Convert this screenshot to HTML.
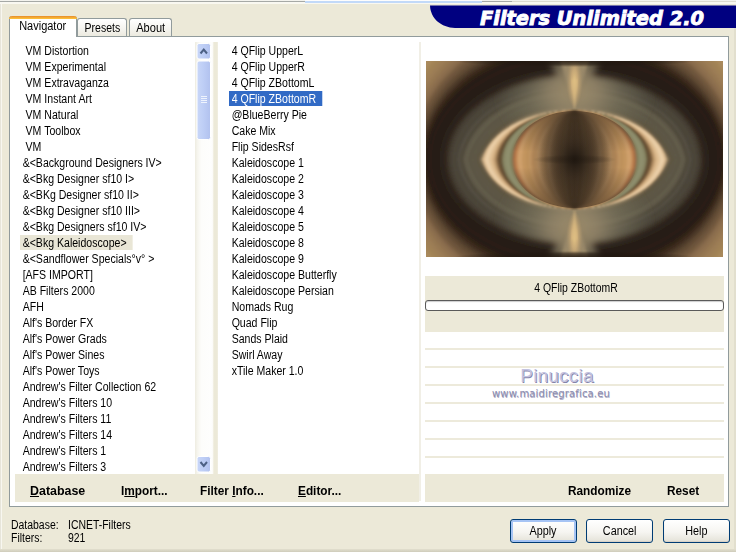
<!DOCTYPE html>
<html lang="en"><head><meta charset="utf-8"><title>Filters Unlimited 2.0</title>
<style>
html,body{margin:0;padding:0}
body{width:736px;height:552px;overflow:hidden;background:#ece9d8;position:relative;font-family:"Liberation Sans",sans-serif;font-size:12px;color:#000}
.abs{position:absolute}
#topstrip{left:0;top:0;width:736px;height:4px}
#panel{left:9px;top:36px;width:719.5px;height:471px;border:1px solid #919b9c;background:#fff;box-sizing:border-box}
.tab{position:absolute;box-sizing:border-box;border:1px solid #919b9c;border-bottom:none;border-radius:3px 3px 0 0;background:linear-gradient(#ffffff,#f4f3ee 60%,#eceadf);text-align:center}
.tab span{display:inline-block;transform:scaleX(.875);transform-origin:50% 50%;white-space:nowrap}
#tab1{left:9px;top:16px;width:68px;height:21px;background:#fff;border-top:none;z-index:3}
#tab1:before{content:"";position:absolute;left:-1px;right:-1px;top:0;height:3px;background:linear-gradient(#e68b2c,#ffc73c);border-radius:3px 3px 0 0}
#tab1 span{margin-top:3px;transform:scaleX(.915)}
#tab2{left:77px;top:18px;width:50px;height:18px}
#tab3{left:129px;top:18px;width:43px;height:18px}
#tab2 span,#tab3 span{margin-top:2px}#tab3 span{transform:scaleX(.92)}
.list{position:absolute;top:42.6px;background:#fff}
.it{height:16px;line-height:16px;white-space:nowrap}
.it span{display:inline-block;transform:scaleX(.88);transform-origin:0 50%;padding:0 7px 0 3px;height:15px;line-height:16px;margin-top:0}
.sel{background:#316ac5;color:#fff}
.isel{background:#e9e6d6}
#llist{left:15px;width:181px;height:432px;padding-left:5px;box-sizing:border-box}
#rlist{left:218px;width:201px;height:432px;padding-left:11px;box-sizing:border-box}
#sb{left:195px;top:42px;width:18px;height:432px}
#div1{left:213px;top:42px;width:5px;height:432px;background:linear-gradient(90deg,#f4f2e8,#ece9d8 25%,#ece9d8 80%,#f2f0e5)}
#div2{left:419px;top:42px;width:2px;height:459px;background:#f1efe6}
#bbar{left:15px;top:474px;width:404px;height:28px;background:#ece9d8}
#rbar{left:425px;top:474px;width:299px;height:28px;background:#ece9d8}
.bb{position:absolute;font-weight:bold;font-size:12px;white-space:nowrap;transform:scaleX(.985);transform-origin:0 50%;line-height:16px}
.bb u{text-decoration-thickness:1px;text-underline-offset:1px}
#namebar{left:425px;top:276px;width:299px;height:56px;background:#ece9d8}
#nm{left:426.5px;top:281px;width:299px;text-align:center}
#nm span{display:inline-block;transform:scaleX(.87);white-space:nowrap}
#prog{left:425px;top:300px;width:299px;height:11px;box-sizing:border-box;border:1px solid #5a5a5a;border-radius:3px;background:#fff;box-shadow:inset 0 1px 1px #ccc}
.ln{position:absolute;left:425px;width:299px;height:2px;background:#edeadb}
.btn{position:absolute;top:519px;height:24px;box-sizing:border-box;border:1px solid #003c74;border-radius:3px;background:linear-gradient(#ffffff,#f6f5f1 55%,#e4e2d8);text-align:center;line-height:22px;box-shadow:inset 0 -1px 1px #d6d0c5}
.btn span{display:inline-block;transform:scaleX(.9);white-space:nowrap}
#b1{left:510px;width:67px;box-shadow:inset 0 0 0 2px #a6c4f4}
#b2{left:586px;width:67px}
#b3{left:663px;width:67px}
.st{position:absolute;white-space:nowrap;transform:scaleX(.87);transform-origin:0 50%;line-height:14px}
#wm1{left:479px;top:365px;width:156px;text-align:center;font-family:"Liberation Sans",sans-serif;font-size:19px;letter-spacing:.2px;color:#c3c3e0;text-shadow:.8px .8px .6px #8585aa}
#wm2{left:470px;top:388px;width:162px;text-align:center;font-family:"DejaVu Sans","Liberation Sans",sans-serif;font-size:10px;letter-spacing:.15px;color:#8c8cae;text-shadow:.5px .5px .5px #b0b0c8}

</style></head>
<body>
<svg class="abs" id="topstrip" width="736" height="4" viewBox="0 0 736 4">
<rect x="0" y="0" width="736" height="1" fill="#f3f3ee"/>
<rect x="0" y="1" width="305" height="1" fill="#a6a9a6"/>
<rect x="0" y="2" width="736" height="2" fill="#f9f8f1"/>
<rect x="305" y="0" width="177" height="1" fill="#fdfdfd"/>
<rect x="305" y="1" width="177" height="2" fill="#c2d9f8"/>
<rect x="482" y="1" width="30" height="1" fill="#a6a9a6"/>
<rect x="512" y="1" width="224" height="1" fill="#dddbd0"/>
</svg>
<svg class="abs" style="left:424px;top:5px" width="312" height="24" viewBox="0 -0.500 312 24">
<path d="M6,0 L312,0 L312,22.5 L31,22.5 C17,22 6.500,13 6,0 Z" fill="#000080"/>
<text x="56" y="19" font-family="'DejaVu Sans','Liberation Sans',sans-serif" font-weight="bold" font-style="italic" font-size="19" fill="#fff" stroke="#fff" stroke-width=".9" textLength="224" lengthAdjust="spacingAndGlyphs">Filters Unlimited 2.0</text>
</svg>
<div class="abs" style="left:0;top:4px;width:1px;height:545px;background:#e7e5da"></div>
<div class="abs" style="left:1px;top:4px;width:1px;height:545px;background:#f8f7f0"></div>
<div class="abs" id="panel"></div>
<div class="tab" id="tab1"><span>Navigator</span></div>
<div class="tab" id="tab2"><span>Presets</span></div>
<div class="tab" id="tab3"><span>About</span></div>
<div class="list" id="llist">
<div class="it"><span>&nbsp;VM Distortion</span></div>
<div class="it"><span>&nbsp;VM Experimental</span></div>
<div class="it"><span>&nbsp;VM Extravaganza</span></div>
<div class="it"><span>&nbsp;VM Instant Art</span></div>
<div class="it"><span>&nbsp;VM Natural</span></div>
<div class="it"><span>&nbsp;VM Toolbox</span></div>
<div class="it"><span>&nbsp;VM</span></div>
<div class="it"><span>&amp;&lt;Background Designers IV&gt;</span></div>
<div class="it"><span>&amp;&lt;Bkg Designer sf10 I&gt;</span></div>
<div class="it"><span>&amp;&lt;BKg Designer sf10 II&gt;</span></div>
<div class="it"><span>&amp;&lt;Bkg Designer sf10 III&gt;</span></div>
<div class="it"><span>&amp;&lt;Bkg Designers sf10 IV&gt;</span></div>
<div class="it"><span class="isel">&amp;&lt;Bkg Kaleidoscope&gt;</span></div>
<div class="it"><span>&amp;&lt;Sandflower Specials°v° &gt;</span></div>
<div class="it"><span>[AFS IMPORT]</span></div>
<div class="it"><span>AB Filters 2000</span></div>
<div class="it"><span>AFH</span></div>
<div class="it"><span>Alf&#x27;s Border FX</span></div>
<div class="it"><span>Alf&#x27;s Power Grads</span></div>
<div class="it"><span>Alf&#x27;s Power Sines</span></div>
<div class="it"><span>Alf&#x27;s Power Toys</span></div>
<div class="it"><span>Andrew&#x27;s Filter Collection 62</span></div>
<div class="it"><span>Andrew&#x27;s Filters 10</span></div>
<div class="it"><span>Andrew&#x27;s Filters 11</span></div>
<div class="it"><span>Andrew&#x27;s Filters 14</span></div>
<div class="it"><span>Andrew&#x27;s Filters 1</span></div>
<div class="it"><span>Andrew&#x27;s Filters 3</span></div>
</div>
<div class="abs" id="sb">
<svg width="18" height="432" viewBox="0 0 18 432">
<defs><linearGradient id="sg" x1="0" x2="1" y1="0" y2="0"><stop offset="0" stop-color="#c9d7f8"/><stop offset=".5" stop-color="#bdcdf5"/><stop offset="1" stop-color="#b1c1ee"/></linearGradient>
<linearGradient id="tg" x1="0" x2="1" y1="0" y2="0"><stop offset="0" stop-color="#eeece1"/><stop offset=".14" stop-color="#f6f5ee"/><stop offset=".35" stop-color="#fdfdfb"/><stop offset=".9" stop-color="#fefefd"/><stop offset="1" stop-color="#fbfaf6"/></linearGradient></defs>
<rect x="0" y="0" width="18" height="432" fill="url(#tg)"/>
<rect x="2" y="1.5" width="13.5" height="15.500" rx="2" fill="url(#sg)" stroke="#fff"/>
<path d="M5.5,11.500 L8.750,7.500 L12,11.500" fill="none" stroke="#4d6185" stroke-width="2"/>
<rect x="2" y="19" width="13.5" height="78.500" rx="2" fill="url(#sg)" stroke="#fff"/>
<path d="M6,54.500h6M6,56.500h6M6,58.500h6M6,60.500h6" stroke="#eef3fd" stroke-width="1"/>
<rect x="2" y="414.500" width="13.5" height="15.500" rx="2" fill="url(#sg)" stroke="#fff"/>
<path d="M5.5,420 L8.750,424 L12,420" fill="none" stroke="#4d6185" stroke-width="2"/>
</svg>
</div>
<div class="abs" id="div1"></div>
<div class="list" id="rlist">
<div class="it"><span>4 QFlip UpperL</span></div>
<div class="it"><span>4 QFlip UpperR</span></div>
<div class="it"><span>4 QFlip ZBottomL</span></div>
<div class="it"><span class="sel">4 QFlip ZBottomR</span></div>
<div class="it"><span>@BlueBerry Pie</span></div>
<div class="it"><span>Cake Mix</span></div>
<div class="it"><span>Flip SidesRsf</span></div>
<div class="it"><span>Kaleidoscope 1</span></div>
<div class="it"><span>Kaleidoscope 2</span></div>
<div class="it"><span>Kaleidoscope 3</span></div>
<div class="it"><span>Kaleidoscope 4</span></div>
<div class="it"><span>Kaleidoscope 5</span></div>
<div class="it"><span>Kaleidoscope 8</span></div>
<div class="it"><span>Kaleidoscope 9</span></div>
<div class="it"><span>Kaleidoscope Butterfly</span></div>
<div class="it"><span>Kaleidoscope Persian</span></div>
<div class="it"><span>Nomads Rug</span></div>
<div class="it"><span>Quad Flip</span></div>
<div class="it"><span>Sands Plaid</span></div>
<div class="it"><span>Swirl Away</span></div>
<div class="it"><span>xTile Maker 1.0</span></div>
</div>
<div class="abs" id="div2"></div>
<div class="abs" id="bbar"></div>
<div class="bb" style="left:30px;top:483px;transform:scaleX(1.035)"><u>D</u>atabase</div>
<div class="bb" style="left:121px;top:483px">I<u>m</u>port...</div>
<div class="bb" style="left:200px;top:483px">Filter <u>I</u>nfo...</div>
<div class="bb" style="left:298px;top:483px"><u>E</u>ditor...</div>
<div class="abs" style="left:426px;top:61px;width:297px;height:196px">
<svg width="297" height="196" viewBox="0 0 297 196">
<defs>
<radialGradient id="spk" cx="0" cy="0" r="1" gradientUnits="userSpaceOnUse" gradientTransform="translate(148.5 20) scale(8 28)"><stop offset="0" stop-color="#e2c284"/><stop offset=".4" stop-color="#d2b07a" stop-opacity=".8"/><stop offset="1" stop-color="#b0946a" stop-opacity="0"/></radialGradient>
<radialGradient id="cdk" cx="0" cy="0" r="1" gradientUnits="userSpaceOnUse" gradientTransform="translate(148.5 98.5) scale(38 42)"><stop offset="0" stop-color="#1a140e" stop-opacity=".9"/><stop offset=".45" stop-color="#2a2018" stop-opacity=".5"/><stop offset="1" stop-color="#2e241a" stop-opacity="0"/></radialGradient>
<radialGradient id="fan" cx="0" cy="0" r="1" gradientUnits="userSpaceOnUse" gradientTransform="translate(148.5 30) scale(80 66)"><stop offset="0" stop-color="#a08f6c" stop-opacity=".97"/><stop offset=".3" stop-color="#94866a" stop-opacity=".85"/><stop offset=".6" stop-color="#827c64" stop-opacity=".45"/><stop offset="1" stop-color="#74735e" stop-opacity="0"/></radialGradient>
<linearGradient id="edg" x1="0" y1="0" x2="0" y2="1"><stop offset="0" stop-color="#20170f" stop-opacity=".8"/><stop offset="1" stop-color="#20170f" stop-opacity="0"/></linearGradient>
<filter id="ab2" x="-5%" y="-5%" width="110%" height="110%"><feGaussianBlur stdDeviation="1.8"/></filter>
<linearGradient id="bsh" x1="0" y1="0" x2="0" y2="1"><stop offset="0" stop-color="#33261a" stop-opacity=".6"/><stop offset=".2" stop-color="#33261a" stop-opacity=".3"/><stop offset=".42" stop-color="#33261a" stop-opacity="0"/><stop offset=".58" stop-color="#33261a" stop-opacity="0"/><stop offset=".8" stop-color="#33261a" stop-opacity=".3"/><stop offset="1" stop-color="#33261a" stop-opacity=".6"/></linearGradient>
<filter id="ab3" x="-5%" y="-5%" width="110%" height="110%"><feGaussianBlur stdDeviation="3.5"/></filter>
<radialGradient id="edg2"><stop offset="0" stop-color="#20170f" stop-opacity=".85"/><stop offset=".55" stop-color="#20170f" stop-opacity=".6"/><stop offset="1" stop-color="#20170f" stop-opacity="0"/></radialGradient>
<radialGradient id="hmid"><stop offset="0" stop-color="#20170f" stop-opacity=".4"/><stop offset=".6" stop-color="#20170f" stop-opacity=".2"/><stop offset="1" stop-color="#20170f" stop-opacity="0"/></radialGradient>
<filter id="ab1" x="-5%" y="-5%" width="110%" height="110%"><feGaussianBlur stdDeviation="0.8"/></filter>
<clipPath id="acl"><rect width="297" height="196"/></clipPath>
</defs>
<g clip-path="url(#acl)">
<rect width="297" height="196" fill="#b89868"/>
<g filter="url(#ab2)">
<path d="M-111.5,98.5C-111.5,-31.5 -44.0,-147.9 57.7,-193.3C95.0,-209.9 94.0,-71.9 148.5,49.5C203.0,-71.9 202.0,-209.9 239.3,-193.3C341.0,-147.9 408.5,-31.5 408.5,98.5C408.5,228.5 341.0,344.9 239.3,390.3C202.0,406.9 203.0,268.9 148.5,147.5C94.0,268.9 95.0,406.9 57.7,390.3C-44.0,344.9 -111.5,228.5 -111.5,98.5Z" fill="#b69666"/>
<path d="M-105.5,98.5C-105.5,-27.7 -38.9,-140.5 61.3,-183.8C97.3,-199.4 96.2,-67.2 148.5,49.5C200.8,-67.2 199.7,-199.4 235.7,-183.8C335.9,-140.5 402.5,-27.7 402.5,98.5C402.5,224.7 335.9,337.5 235.7,380.8C199.7,396.4 200.8,264.2 148.5,147.5C96.2,264.2 97.3,396.4 61.3,380.8C-38.9,337.5 -105.5,224.7 -105.5,98.5Z" fill="#b59565"/>
<path d="M-99.5,98.5C-99.5,-23.9 -33.7,-133.1 64.9,-174.3C99.6,-188.9 98.3,-62.4 148.5,49.5C198.7,-62.4 197.4,-188.9 232.1,-174.3C330.7,-133.1 396.5,-23.9 396.5,98.5C396.5,220.9 330.7,330.1 232.1,371.3C197.4,385.9 198.7,259.4 148.5,147.5C98.3,259.4 99.6,385.9 64.9,371.3C-33.7,330.1 -99.5,220.9 -99.5,98.5Z" fill="#b69666"/>
<path d="M-93.5,98.5C-93.5,-20.0 -28.5,-125.6 68.5,-164.8C101.9,-178.3 100.5,-57.7 148.5,49.5C196.5,-57.7 195.1,-178.3 228.5,-164.8C325.5,-125.6 390.5,-20.0 390.5,98.5C390.5,217.0 325.5,322.6 228.5,361.8C195.1,375.3 196.5,254.7 148.5,147.5C100.5,254.7 101.9,375.3 68.5,361.8C-28.5,322.6 -93.5,217.0 -93.5,98.5Z" fill="#b49464"/>
<path d="M-87.5,98.5C-87.5,-16.2 -23.4,-118.1 72.1,-155.3C104.1,-167.7 102.7,-52.9 148.5,49.5C194.3,-52.9 192.9,-167.7 224.9,-155.3C320.4,-118.1 384.5,-16.2 384.5,98.5C384.5,213.2 320.4,315.1 224.9,352.3C192.9,364.7 194.3,249.9 148.5,147.5C102.7,249.9 104.1,364.7 72.1,352.3C-23.4,315.1 -87.5,213.2 -87.5,98.5Z" fill="#b39263"/>
<path d="M-81.5,98.5C-81.5,-12.3 -18.2,-110.6 75.7,-145.7C106.4,-157.1 104.8,-48.1 148.5,49.5C192.2,-48.1 190.6,-157.1 221.3,-145.7C315.2,-110.6 378.5,-12.3 378.5,98.5C378.5,209.3 315.2,307.6 221.3,342.7C190.6,354.1 192.2,245.1 148.5,147.5C104.8,245.1 106.4,354.1 75.7,342.7C-18.2,307.6 -81.5,209.3 -81.5,98.5Z" fill="#b49364"/>
<path d="M-75.5,98.5C-75.5,-8.3 -13.0,-103.0 79.3,-136.0C108.6,-146.5 107.0,-43.3 148.5,49.5C190.0,-43.3 188.4,-146.5 217.7,-136.0C310.0,-103.0 372.5,-8.3 372.5,98.5C372.5,205.3 310.0,300.0 217.7,333.0C188.4,343.5 190.0,240.3 148.5,147.5C107.0,240.3 108.6,343.5 79.3,333.0C-13.0,300.0 -75.5,205.3 -75.5,98.5Z" fill="#b69666"/>
<path d="M-69.5,98.5C-69.5,-4.4 -7.8,-95.4 82.9,-126.4C110.8,-135.9 109.1,-38.4 148.5,49.5C187.9,-38.4 186.2,-135.9 214.1,-126.4C304.8,-95.4 366.5,-4.4 366.5,98.5C366.5,201.4 304.8,292.4 214.1,323.4C186.2,332.9 187.9,235.4 148.5,147.5C109.1,235.4 110.8,332.9 82.9,323.4C-7.8,292.4 -69.5,201.4 -69.5,98.5Z" fill="#b59465"/>
<path d="M-63.5,98.5C-63.5,-0.4 -2.6,-87.7 86.5,-116.7C113.0,-125.3 111.3,-33.6 148.5,49.5C185.7,-33.6 184.0,-125.3 210.5,-116.7C299.6,-87.7 360.5,-0.4 360.5,98.5C360.5,197.4 299.6,284.7 210.5,313.7C184.0,322.3 185.7,230.6 148.5,147.5C111.3,230.6 113.0,322.3 86.5,313.7C-2.6,284.7 -63.5,197.4 -63.5,98.5Z" fill="#b49364"/>
<path d="M-57.5,98.5C-57.5,3.6 2.6,-80.0 90.1,-106.9C115.2,-114.6 113.5,-28.7 148.5,49.5C183.5,-28.7 181.8,-114.6 206.9,-106.9C294.4,-80.0 354.5,3.6 354.5,98.5C354.5,193.4 294.4,277.0 206.9,303.9C181.8,311.6 183.5,225.7 148.5,147.5C113.5,225.7 115.2,311.6 90.1,303.9C2.6,277.0 -57.5,193.4 -57.5,98.5Z" fill="#b08f60"/>
<path d="M-51.5,98.5C-51.5,7.6 7.8,-72.2 93.7,-97.1C117.4,-104.0 115.6,-23.8 148.5,49.5C181.4,-23.8 179.6,-104.0 203.3,-97.1C289.2,-72.2 348.5,7.6 348.5,98.5C348.5,189.4 289.2,269.2 203.3,294.1C179.6,301.0 181.4,220.8 148.5,147.5C115.6,220.8 117.4,301.0 93.7,294.1C7.8,269.2 -51.5,189.4 -51.5,98.5Z" fill="#b19061"/>
<path d="M-49.0,98.5C-49.0,9.3 9.9,-69.0 95.2,-93.0C118.3,-99.5 116.5,-21.8 148.5,49.5C180.5,-21.8 178.7,-99.5 201.8,-93.0C287.1,-69.0 346.0,9.3 346.0,98.5C346.0,187.7 287.1,266.0 201.8,290.0C178.7,296.5 180.5,218.8 148.5,147.5C116.5,218.8 118.3,296.5 95.2,290.0C9.9,266.0 -49.0,187.7 -49.0,98.5Z" fill="#af8e5f"/>
<path d="M-46.5,98.5C-46.5,11.0 12.1,-65.7 96.7,-88.9C119.2,-95.1 117.4,-19.7 148.5,49.5C179.6,-19.7 177.8,-95.1 200.3,-88.9C284.9,-65.7 343.5,11.0 343.5,98.5C343.5,186.0 284.9,262.7 200.3,285.9C177.8,292.1 179.6,216.7 148.5,147.5C117.4,216.7 119.2,292.1 96.7,285.9C12.1,262.7 -46.5,186.0 -46.5,98.5Z" fill="#ae8d5e"/>
<path d="M-44.0,98.5C-44.0,12.7 14.3,-62.4 98.2,-84.8C120.1,-90.6 118.3,-17.7 148.5,49.5C178.7,-17.7 176.9,-90.6 198.8,-84.8C282.7,-62.4 341.0,12.7 341.0,98.5C341.0,184.3 282.7,259.4 198.8,281.8C176.9,287.6 178.7,214.7 148.5,147.5C118.3,214.7 120.1,287.6 98.2,281.8C14.3,259.4 -44.0,184.3 -44.0,98.5Z" fill="#ae8d5e"/>
<path d="M-41.5,98.5C-41.5,14.4 16.5,-59.1 99.7,-80.7C121.0,-86.2 119.2,-15.6 148.5,49.5C177.8,-15.6 176.0,-86.2 197.3,-80.7C280.5,-59.1 338.5,14.4 338.5,98.5C338.5,182.6 280.5,256.1 197.3,277.7C176.0,283.2 177.8,212.6 148.5,147.5C119.2,212.6 121.0,283.2 99.7,277.7C16.5,256.1 -41.5,182.6 -41.5,98.5Z" fill="#ad8c5d"/>
<path d="M-39.0,98.5C-39.0,16.2 18.6,-55.8 101.2,-76.5C121.8,-81.7 120.1,-13.5 148.5,49.5C176.9,-13.5 175.2,-81.7 195.8,-76.5C278.4,-55.8 336.0,16.2 336.0,98.5C336.0,180.8 278.4,252.8 195.8,273.5C175.2,278.7 176.9,210.5 148.5,147.5C120.1,210.5 121.8,278.7 101.2,273.5C18.6,252.8 -39.0,180.8 -39.0,98.5Z" fill="#af8e60"/>
<path d="M-36.5,98.5C-36.5,17.9 20.8,-52.5 102.7,-72.4C122.7,-77.3 121.0,-11.5 148.5,49.5C176.0,-11.5 174.3,-77.3 194.3,-72.4C276.2,-52.5 333.5,17.9 333.5,98.5C333.5,179.1 276.2,249.5 194.3,269.4C174.3,274.3 176.0,208.5 148.5,147.5C121.0,208.5 122.7,274.3 102.7,269.4C20.8,249.5 -36.5,179.1 -36.5,98.5Z" fill="#ac8c5e"/>
<path d="M-34.0,98.5C-34.0,19.6 23.0,-49.1 104.2,-68.3C123.6,-72.8 121.9,-9.4 148.5,49.5C175.1,-9.4 173.4,-72.8 192.8,-68.3C274.0,-49.1 331.0,19.6 331.0,98.5C331.0,177.4 274.0,246.1 192.8,265.3C173.4,269.8 175.1,206.4 148.5,147.5C121.9,206.4 123.6,269.8 104.2,265.3C23.0,246.1 -34.0,177.4 -34.0,98.5Z" fill="#aa8a5c"/>
<path d="M-31.5,98.5C-31.5,21.4 25.2,-45.8 105.7,-64.1C124.5,-68.4 122.8,-7.3 148.5,49.5C174.2,-7.3 172.5,-68.4 191.3,-64.1C271.8,-45.8 328.5,21.4 328.5,98.5C328.5,175.6 271.8,242.8 191.3,261.1C172.5,265.4 174.2,204.3 148.5,147.5C122.8,204.3 124.5,265.4 105.7,261.1C25.2,242.8 -31.5,175.6 -31.5,98.5Z" fill="#a8895b"/>
<path d="M-29.0,98.5C-29.0,23.1 27.3,-42.4 107.2,-59.9C125.4,-63.9 123.7,-5.2 148.5,49.5C173.3,-5.2 171.6,-63.9 189.8,-59.9C269.7,-42.4 326.0,23.1 326.0,98.5C326.0,173.9 269.7,239.4 189.8,256.9C171.6,260.9 173.3,202.2 148.5,147.5C123.7,202.2 125.4,260.9 107.2,256.9C27.3,239.4 -29.0,173.9 -29.0,98.5Z" fill="#a28356"/>
<path d="M-26.5,98.5C-26.5,24.9 29.5,-39.0 108.7,-55.7C126.2,-59.5 124.6,-3.1 148.5,49.5C172.4,-3.1 170.8,-59.5 188.3,-55.7C267.5,-39.0 323.5,24.9 323.5,98.5C323.5,172.1 267.5,236.0 188.3,252.7C170.8,256.5 172.4,200.1 148.5,147.5C124.6,200.1 126.2,256.5 108.7,252.7C29.5,236.0 -26.5,172.1 -26.5,98.5Z" fill="#9f8055"/>
<path d="M-24.0,98.5C-24.0,26.7 31.7,-35.6 110.2,-51.6C127.1,-55.0 125.5,-1.0 148.5,49.5C171.5,-1.0 169.9,-55.0 186.8,-51.6C265.3,-35.6 321.0,26.7 321.0,98.5C321.0,170.3 265.3,232.6 186.8,248.6C169.9,252.0 171.5,198.0 148.5,147.5C125.5,198.0 127.1,252.0 110.2,248.6C31.7,232.6 -24.0,170.3 -24.0,98.5Z" fill="#9b7c54"/>
<path d="M-21.5,98.5C-21.5,28.5 33.9,-32.2 111.7,-47.4C128.0,-50.5 126.4,1.1 148.5,49.5C170.6,1.1 169.0,-50.5 185.3,-47.4C263.1,-32.2 318.5,28.5 318.5,98.5C318.5,168.5 263.1,229.2 185.3,244.4C169.0,247.5 170.6,195.9 148.5,147.5C126.4,195.9 128.0,247.5 111.7,244.4C33.9,229.2 -21.5,168.5 -21.5,98.5Z" fill="#957751"/>
<path d="M-19.0,98.5C-19.0,30.2 36.1,-28.8 113.2,-43.1C128.8,-46.1 127.3,3.2 148.5,49.5C169.7,3.2 168.2,-46.1 183.8,-43.1C260.9,-28.8 316.0,30.2 316.0,98.5C316.0,166.8 260.9,225.8 183.8,240.1C168.2,243.1 169.7,193.8 148.5,147.5C127.3,193.8 128.8,243.1 113.2,240.1C36.1,225.8 -19.0,166.8 -19.0,98.5Z" fill="#8f714f"/>
<path d="M-16.5,98.5C-16.5,32.0 38.3,-25.3 114.7,-38.9C129.7,-41.6 128.2,5.3 148.5,49.5C168.8,5.3 167.3,-41.6 182.3,-38.9C258.7,-25.3 313.5,32.0 313.5,98.5C313.5,165.0 258.7,222.3 182.3,235.9C167.3,238.6 168.8,191.7 148.5,147.5C128.2,191.7 129.7,238.6 114.7,235.9C38.3,222.3 -16.5,165.0 -16.5,98.5Z" fill="#886b4c"/>
<path d="M-14.0,98.5C-14.0,33.9 40.4,-21.8 116.2,-34.7C130.5,-37.1 129.1,7.4 148.5,49.5C167.9,7.4 166.5,-37.1 180.8,-34.7C256.6,-21.8 311.0,33.9 311.0,98.5C311.0,163.1 256.6,218.8 180.8,231.7C166.5,234.1 167.9,189.6 148.5,147.5C129.1,189.6 130.5,234.1 116.2,231.7C40.4,218.8 -14.0,163.1 -14.0,98.5Z" fill="#765b3f"/>
<path d="M-11.5,98.5C-11.5,35.7 42.6,-18.3 117.7,-30.4C131.4,-32.6 130.6,9.5 148.5,49.5C166.4,9.5 165.6,-32.6 179.3,-30.4C254.4,-18.3 308.5,35.7 308.5,98.5C308.5,161.3 254.4,215.3 179.3,227.4C165.6,229.6 166.4,187.5 148.5,147.5C130.6,187.5 131.4,229.6 117.7,227.4C42.6,215.3 -11.5,161.3 -11.5,98.5Z" fill="#6b533a"/>
<path d="M-9.0,98.5C-9.0,37.5 44.8,-14.8 119.2,-26.2C132.2,-28.2 132.2,11.7 148.5,49.5C164.8,11.7 164.8,-28.2 177.8,-26.2C252.2,-14.8 306.0,37.5 306.0,98.5C306.0,159.5 252.2,211.8 177.8,223.2C164.8,225.2 164.8,185.3 148.5,147.5C132.2,185.3 132.2,225.2 119.2,223.2C44.8,211.8 -9.0,159.5 -9.0,98.5Z" fill="#5e4833"/>
<path d="M-6.5,98.5C-6.5,39.4 47.0,-11.3 120.7,-21.9C133.1,-23.7 133.8,13.8 148.5,49.5C163.2,13.8 163.9,-23.7 176.3,-21.9C250.0,-11.3 303.5,39.4 303.5,98.5C303.5,157.6 250.0,208.3 176.3,218.9C163.9,220.7 163.2,183.2 148.5,147.5C133.8,183.2 133.1,220.7 120.7,218.9C47.0,208.3 -6.5,157.6 -6.5,98.5Z" fill="#4d3b29"/>
<path d="M-4.0,98.5C-4.0,41.2 49.2,-7.8 122.2,-17.6C133.9,-19.2 135.2,15.9 148.5,49.5C161.8,15.9 163.1,-19.2 174.8,-17.6C247.8,-7.8 301.0,41.2 301.0,98.5C301.0,155.8 247.8,204.8 174.8,214.6C163.1,216.2 161.8,181.1 148.5,147.5C135.2,181.1 133.9,216.2 122.2,214.6C49.2,204.8 -4.0,155.8 -4.0,98.5Z" fill="#3c2c1e"/>
<path d="M-1.5,98.5C-1.5,43.1 51.4,-4.2 123.7,-13.3C134.8,-14.7 136.6,18.1 148.5,49.5C160.4,18.1 162.2,-14.7 173.3,-13.3C245.6,-4.2 298.5,43.1 298.5,98.5C298.5,153.9 245.6,201.2 173.3,210.3C162.2,211.7 160.4,178.9 148.5,147.5C136.6,178.9 134.8,211.7 123.7,210.3C51.4,201.2 -1.5,153.9 -1.5,98.5Z" fill="#2e2117"/>
<path d="M1.0,98.5C1.0,45.0 53.6,-0.6 125.2,-9.0C135.6,-10.3 137.9,20.2 148.5,49.5C159.1,20.2 161.4,-10.3 171.8,-9.0C243.4,-0.6 296.0,45.0 296.0,98.5C296.0,152.0 243.4,197.6 171.8,206.0C161.4,207.3 159.1,176.8 148.5,147.5C137.9,176.8 135.6,207.3 125.2,206.0C53.6,197.6 1.0,152.0 1.0,98.5Z" fill="#281c13"/>
<path d="M3.5,98.5C3.5,46.9 55.9,3.0 126.7,-4.7C136.5,-5.8 139.1,22.4 148.5,49.5C157.9,22.4 160.5,-5.8 170.3,-4.7C241.1,3.0 293.5,46.9 293.5,98.5C293.5,150.1 241.1,194.0 170.3,201.7C160.5,202.8 157.9,174.6 148.5,147.5C139.1,174.6 136.5,202.8 126.7,201.7C55.9,194.0 3.5,150.1 3.5,98.5Z" fill="#2a1f16"/>
<path d="M6.0,98.5C6.0,48.8 58.1,6.7 128.2,-0.4C137.3,-1.3 140.3,24.6 148.5,49.5C156.7,24.6 159.7,-1.3 168.8,-0.4C238.9,6.7 291.0,48.8 291.0,98.5C291.0,148.2 238.9,190.3 168.8,197.4C159.7,198.3 156.7,172.4 148.5,147.5C140.3,172.4 137.3,198.3 128.2,197.4C58.1,190.3 6.0,148.2 6.0,98.5Z" fill="#271d15"/>
<path d="M8.5,98.5C8.5,50.3 59.6,9.4 128.5,2.5C137.5,1.6 140.5,26.0 148.5,49.5C156.5,26.0 159.5,1.6 168.5,2.5C237.4,9.4 288.5,50.3 288.5,98.5C288.5,146.7 237.4,187.6 168.5,194.5C159.5,195.4 156.5,171.0 148.5,147.5C140.5,171.0 137.5,195.4 128.5,194.5C59.6,187.6 8.5,146.7 8.5,98.5Z" fill="#261c14"/>
<path d="M11.0,98.5C11.0,51.6 61.0,11.8 128.5,5.0C137.5,4.1 140.5,27.3 148.5,49.5C156.5,27.3 159.5,4.1 168.5,5.0C236.0,11.8 286.0,51.6 286.0,98.5C286.0,145.4 236.0,185.2 168.5,192.0C159.5,192.9 156.5,169.7 148.5,147.5C140.5,169.7 137.5,192.9 128.5,192.0C61.0,185.2 11.0,145.4 11.0,98.5Z" fill="#271d14"/>
<path d="M13.5,98.5C13.5,53.0 62.4,14.3 128.5,7.5C137.5,6.6 140.5,28.5 148.5,49.5C156.5,28.5 159.5,6.6 168.5,7.5C234.6,14.3 283.5,53.0 283.5,98.5C283.5,144.0 234.6,182.7 168.5,189.5C159.5,190.4 156.5,168.5 148.5,147.5C140.5,168.5 137.5,190.4 128.5,189.5C62.4,182.7 13.5,144.0 13.5,98.5Z" fill="#2c231a"/>
<path d="M16.0,98.5C16.0,54.3 63.8,16.7 128.5,10.0C137.5,9.1 140.5,29.8 148.5,49.5C156.5,29.8 159.5,9.1 168.5,10.0C233.2,16.7 281.0,54.3 281.0,98.5C281.0,142.7 233.2,180.3 168.5,187.0C159.5,187.9 156.5,167.2 148.5,147.5C140.5,167.2 137.5,187.9 128.5,187.0C63.8,180.3 16.0,142.7 16.0,98.5Z" fill="#2c231a"/>
<path d="M18.5,98.5C18.5,55.6 65.2,19.1 128.5,12.5C137.5,11.6 140.5,31.0 148.5,49.5C156.5,31.0 159.5,11.6 168.5,12.5C231.8,19.1 278.5,55.6 278.5,98.5C278.5,141.4 231.8,177.9 168.5,184.5C159.5,185.4 156.5,166.0 148.5,147.5C140.5,166.0 137.5,185.4 128.5,184.5C65.2,177.9 18.5,141.4 18.5,98.5Z" fill="#30271d"/>
<path d="M21.0,98.5C21.0,56.9 66.6,21.6 128.5,15.0C137.5,14.1 140.5,32.3 148.5,49.5C156.5,32.3 159.5,14.1 168.5,15.0C230.4,21.6 276.0,56.9 276.0,98.5C276.0,140.1 230.4,175.4 168.5,182.0C159.5,182.9 156.5,164.7 148.5,147.5C140.5,164.7 137.5,182.9 128.5,182.0C66.6,175.4 21.0,140.1 21.0,98.5Z" fill="#3c342a"/>
<path d="M23.5,98.5C23.9,58.3 68.0,24.0 128.5,17.6C137.4,16.6 140.5,33.5 148.5,49.5C156.5,33.5 159.6,16.6 168.5,17.6C229.0,24.0 273.1,58.3 273.5,98.5C273.1,138.7 229.0,173.0 168.5,179.4C159.6,180.4 156.5,163.5 148.5,147.5C140.5,163.5 137.4,180.4 128.5,179.4C68.0,173.0 23.9,138.7 23.5,98.5Z" fill="#463f34"/>
<path d="M25.0,98.5C26.1,59.2 68.8,25.4 128.5,19.1C137.4,18.1 140.5,34.3 148.5,49.5C156.5,34.3 159.6,18.1 168.5,19.1C228.2,25.4 270.9,59.2 272.0,98.5C270.9,137.8 228.2,171.6 168.5,177.9C159.6,178.9 156.5,162.7 148.5,147.5C140.5,162.7 137.4,178.9 128.5,177.9C68.8,171.6 26.1,137.8 25.0,98.5Z" fill="#474035"/>
<path d="M26.5,98.5C28.2,60.0 69.6,26.9 128.5,20.6C137.4,19.6 140.5,35.0 148.5,49.5C156.5,35.0 159.6,19.6 168.5,20.6C227.4,26.9 268.8,60.0 270.5,98.5C268.8,137.0 227.4,170.1 168.5,176.4C159.6,177.4 156.5,162.0 148.5,147.5C140.5,162.0 137.4,177.4 128.5,176.4C69.6,170.1 28.2,137.0 26.5,98.5Z" fill="#4d473b"/>
<path d="M28.0,98.5C30.3,60.9 70.5,28.4 128.5,22.1C137.4,21.1 140.5,35.8 148.5,49.5C156.5,35.8 159.6,21.1 168.5,22.1C226.5,28.4 266.7,60.9 269.0,98.5C266.7,136.1 226.5,168.6 168.5,174.9C159.6,175.9 156.5,161.2 148.5,147.5C140.5,161.2 137.4,175.9 128.5,174.9C70.5,168.6 30.3,136.1 28.0,98.5Z" fill="#4c463a"/>
<path d="M29.5,98.5C32.4,61.7 71.3,29.8 128.5,23.6C137.4,22.6 140.5,36.5 148.5,49.5C156.5,36.5 159.6,22.6 168.5,23.6C225.7,29.8 264.6,61.7 267.5,98.5C264.6,135.3 225.7,167.2 168.5,173.4C159.6,174.4 156.5,160.5 148.5,147.5C140.5,160.5 137.4,174.4 128.5,173.4C71.3,167.2 32.4,135.3 29.5,98.5Z" fill="#494337"/>
<path d="M31.0,98.5C34.5,62.6 72.2,31.3 128.5,25.1C137.4,24.1 140.5,37.3 148.5,49.5C156.5,37.3 159.6,24.1 168.5,25.1C224.8,31.3 262.5,62.6 266.0,98.5C262.5,134.4 224.8,165.7 168.5,171.9C159.6,172.9 156.5,159.7 148.5,147.5C140.5,159.7 137.4,172.9 128.5,171.9C72.2,165.7 34.5,134.4 31.0,98.5Z" fill="#4e483c"/>
<path d="M32.5,98.5C36.6,63.2 73.4,32.4 129.3,26.5C137.9,25.6 140.8,38.0 148.5,49.5C156.2,38.0 159.1,25.6 167.7,26.5C223.6,32.4 260.4,63.2 264.5,98.5C260.4,133.8 223.6,164.6 167.7,170.5C159.1,171.4 156.2,159.0 148.5,147.5C140.8,159.0 137.9,171.4 129.3,170.5C73.4,164.6 36.6,133.8 32.5,98.5Z" fill="#5b5548"/>
<path d="M34.0,98.5C38.6,63.8 74.9,33.4 130.5,27.9C138.6,27.1 141.3,38.7 148.5,49.5C155.7,38.7 158.4,27.1 166.5,27.9C222.1,33.4 258.4,63.8 263.0,98.5C258.4,133.2 222.1,163.6 166.5,169.1C158.4,169.9 155.7,158.3 148.5,147.5C141.3,158.3 138.6,169.9 130.5,169.1C74.9,163.6 38.6,133.2 34.0,98.5Z" fill="#4b4537"/>
<path d="M35.5,98.5C40.7,64.4 76.4,34.4 131.7,29.3C139.2,28.6 141.8,39.4 148.5,49.5C155.2,39.4 157.8,28.6 165.3,29.3C220.6,34.4 256.3,64.4 261.5,98.5C256.3,132.6 220.6,162.6 165.3,167.7C157.8,168.4 155.2,157.6 148.5,147.5C141.8,157.6 139.2,168.4 131.7,167.7C76.4,162.6 40.7,132.6 35.5,98.5Z" fill="#4d4738"/>
<path d="M37.0,98.5C42.7,65.0 77.9,35.4 132.9,30.7C139.9,30.1 142.3,40.1 148.5,49.5C154.7,40.1 157.1,30.1 164.1,30.7C219.1,35.4 254.3,65.0 260.0,98.5C254.3,132.0 219.1,161.6 164.1,166.3C157.1,166.9 154.7,156.9 148.5,147.5C142.3,156.9 139.9,166.9 132.9,166.3C77.9,161.6 42.7,132.0 37.0,98.5Z" fill="#605a4a"/>
<path d="M38.5,98.5C44.7,65.6 79.4,36.5 134.1,32.1C140.6,31.6 142.7,40.8 148.5,49.5C154.3,40.8 156.4,31.6 162.9,32.1C217.6,36.5 252.3,65.6 258.5,98.5C252.3,131.4 217.6,160.5 162.9,164.9C156.4,165.4 154.3,156.2 148.5,147.5C142.7,156.2 140.6,165.4 134.1,164.9C79.4,160.5 44.7,131.4 38.5,98.5Z" fill="#5e5847"/>
<path d="M40.0,98.5C46.7,66.2 80.9,37.5 135.3,33.5C141.2,33.0 143.2,41.5 148.5,49.5C153.8,41.5 155.8,33.0 161.7,33.5C216.1,37.5 250.3,66.2 257.0,98.5C250.3,130.8 216.1,159.5 161.7,163.5C155.8,164.0 153.8,155.5 148.5,147.5C143.2,155.5 141.2,164.0 135.3,163.5C80.9,159.5 46.7,130.8 40.0,98.5Z" fill="#66604e"/>
<path d="M41.5,98.5C48.7,66.8 82.4,38.6 136.5,34.9C141.9,34.5 143.7,42.2 148.5,49.5C153.3,42.2 155.1,34.5 160.5,34.9C214.6,38.6 248.3,66.8 255.5,98.5C248.3,130.2 214.6,158.4 160.5,162.1C155.1,162.5 153.3,154.8 148.5,147.5C143.7,154.8 141.9,162.5 136.5,162.1C82.4,158.4 48.7,130.2 41.5,98.5Z" fill="#5e5847"/>
<path d="M43.0,98.5C50.6,67.4 83.9,39.6 137.7,36.3C142.6,36.0 144.2,42.9 148.5,49.5C152.8,42.9 154.4,36.0 159.3,36.3C213.1,39.6 246.4,67.4 254.0,98.5C246.4,129.6 213.1,157.4 159.3,160.7C154.4,161.0 152.8,154.1 148.5,147.5C144.2,154.1 142.6,161.0 137.7,160.7C83.9,157.4 50.6,129.6 43.0,98.5Z" fill="#554f3e"/>
<path d="M44.5,98.5C52.6,68.1 85.4,40.7 138.9,37.8C143.2,37.5 144.7,43.6 148.5,49.5C152.3,43.6 153.8,37.5 158.1,37.8C211.6,40.7 244.4,68.1 252.5,98.5C244.4,128.9 211.6,156.3 158.1,159.2C153.8,159.5 152.3,153.4 148.5,147.5C144.7,153.4 143.2,159.5 138.9,159.2C85.4,156.3 52.6,128.9 44.5,98.5Z" fill="#645e4e"/>
<path d="M46.0,98.5C54.5,68.7 86.9,41.7 140.1,39.2C143.9,39.0 145.1,44.4 148.5,49.5C151.9,44.4 153.1,39.0 156.9,39.2C210.1,41.7 242.5,68.7 251.0,98.5C242.5,128.3 210.1,155.3 156.9,157.8C153.1,158.0 151.9,152.6 148.5,147.5C145.1,152.6 143.9,158.0 140.1,157.8C86.9,155.3 54.5,128.3 46.0,98.5Z" fill="#585240"/>
<path d="M47.5,98.5C56.4,69.4 88.4,42.8 141.3,40.6C144.5,40.5 145.6,45.1 148.5,49.5C151.4,45.1 152.5,40.5 155.7,40.6C208.6,42.8 240.6,69.4 249.5,98.5C240.6,127.6 208.6,154.2 155.7,156.4C152.5,156.5 151.4,151.9 148.5,147.5C145.6,151.9 144.5,156.5 141.3,156.4C88.4,154.2 56.4,127.6 47.5,98.5Z" fill="#625c49"/>
<path d="M49.0,98.5C58.3,70.0 90.0,43.9 142.5,42.1C145.2,42.0 146.1,45.8 148.5,49.5C150.9,45.8 151.8,42.0 154.5,42.1C207.0,43.9 238.7,70.0 248.0,98.5C238.7,127.0 207.0,153.1 154.5,154.9C151.8,155.0 150.9,151.2 148.5,147.5C146.1,151.2 145.2,155.0 142.5,154.9C90.0,153.1 58.3,127.0 49.0,98.5Z" fill="#5a5340"/>
<path d="M50.5,98.5C60.2,70.7 91.5,45.0 143.7,43.6C145.9,43.5 146.6,46.5 148.5,49.5C150.4,46.5 151.1,43.5 153.3,43.6C205.5,45.0 236.8,70.7 246.5,98.5C236.8,126.3 205.5,152.0 153.3,153.4C151.1,153.5 150.4,150.5 148.5,147.5C146.6,150.5 145.9,153.5 143.7,153.4C91.5,152.0 60.2,126.3 50.5,98.5Z" fill="#5f5846"/>
<path d="M52.0,98.5C62.0,71.4 93.0,46.1 144.9,45.0C146.5,45.0 147.1,47.3 148.5,49.5C149.9,47.3 150.5,45.0 152.1,45.0C204.0,46.1 235.0,71.4 245.0,98.5C235.0,125.6 204.0,150.9 152.1,152.0C150.5,152.0 149.9,149.7 148.5,147.5C147.1,149.7 146.5,152.0 144.9,152.0C93.0,150.9 62.0,125.6 52.0,98.5Z" fill="#5d533f"/>
<path d="M53.5,98.5C63.9,72.0 94.6,47.2 146.1,46.5C147.2,46.5 147.5,48.0 148.5,49.5C149.5,48.0 149.8,46.5 150.9,46.5C202.4,47.2 233.1,72.0 243.5,98.5C233.1,125.0 202.4,149.8 150.9,150.5C149.8,150.5 149.5,149.0 148.5,147.5C147.5,149.0 147.2,150.5 146.1,150.5C94.6,149.8 63.9,125.0 53.5,98.5Z" fill="#77674d"/>
<path d="M55.0,98.5C65.7,72.7 96.1,48.4 147.3,48.0C147.8,48.0 148.0,48.8 148.5,49.5C149.0,48.8 149.2,48.0 149.7,48.0C200.9,48.4 231.3,72.7 242.0,98.5C231.3,124.3 200.9,148.6 149.7,149.0C149.2,149.0 149.0,148.2 148.5,147.5C148.0,148.2 147.8,149.0 147.3,149.0C96.1,148.6 65.7,124.3 55.0,98.5Z" fill="#a38c6b"/>
</g>
<clipPath id="gcl"><path d="M21.5,98.5C21.5,57.2 66.9,22.0 128.5,15.5C137.5,14.6 140.5,32.5 148.5,49.5C156.5,32.5 159.5,14.6 168.5,15.5C230.1,22.0 275.5,57.2 275.5,98.5C275.5,139.8 230.1,175.0 168.5,181.5C159.5,182.4 156.5,164.5 148.5,147.5C140.5,164.5 137.5,182.4 128.5,181.5C66.9,175.0 21.5,139.8 21.5,98.5Z"/><path d="M148.5,52 L122,-3 L175,-3 Z"/><path d="M148.5,145 L122,200 L175,200 Z"/></clipPath>
<g filter="url(#ab3)"><g clip-path="url(#gcl)">
<ellipse cx="148.5" cy="30" rx="80" ry="66" fill="url(#fan)"/>
<ellipse cx="148.5" cy="30" rx="80" ry="66" fill="url(#fan)" transform="translate(0 197) scale(1 -1)"/>
</g></g>
<g filter="url(#ab1)">
<path d="M56.5,98.5C63.7,70.2 102.6,49.5 148.5,49.5C194.4,49.5 233.3,70.2 240.5,98.5C233.3,126.8 194.4,147.5 148.5,147.5C102.6,147.5 63.7,126.8 56.5,98.5Z" fill="#d7b68c"/>
<path d="M58.0,98.5C64.6,70.3 103.0,49.5 148.5,49.5C194.0,49.5 232.4,70.3 239.0,98.5C232.4,126.7 194.0,147.5 148.5,147.5C103.0,147.5 64.6,126.7 58.0,98.5Z" fill="#e2c49b"/>
<path d="M59.5,98.5C65.5,70.4 103.4,49.5 148.5,49.5C193.6,49.5 231.5,70.4 237.5,98.5C231.5,126.6 193.6,147.5 148.5,147.5C103.4,147.5 65.5,126.6 59.5,98.5Z" fill="#efd3ac"/>
<path d="M61.0,98.5C66.5,70.4 103.9,49.5 148.5,49.5C193.1,49.5 230.5,70.4 236.0,98.5C230.5,126.6 193.1,147.5 148.5,147.5C103.9,147.5 66.5,126.6 61.0,98.5Z" fill="#e9cea8"/>
<path d="M62.5,98.5C67.5,70.5 104.4,49.5 148.5,49.5C192.6,49.5 229.5,70.5 234.5,98.5C229.5,126.5 192.6,147.5 148.5,147.5C104.4,147.5 67.5,126.5 62.5,98.5Z" fill="#e4c69c"/>
<path d="M64.0,98.5C68.4,70.6 104.8,49.5 148.5,49.5C192.2,49.5 228.6,70.6 233.0,98.5C228.6,126.4 192.2,147.5 148.5,147.5C104.8,147.5 68.4,126.4 64.0,98.5Z" fill="#e0bf93"/>
<path d="M65.5,98.5C69.5,70.7 105.3,49.5 148.5,49.5C191.7,49.5 227.5,70.7 231.5,98.5C227.5,126.3 191.7,147.5 148.5,147.5C105.3,147.5 69.5,126.3 65.5,98.5Z" fill="#dbb88b"/>
<path d="M67.0,98.5C70.5,70.8 105.9,49.5 148.5,49.5C191.1,49.5 226.5,70.8 230.0,98.5C226.5,126.2 191.1,147.5 148.5,147.5C105.9,147.5 70.5,126.2 67.0,98.5Z" fill="#c9a67a"/>
<path d="M68.5,98.5C71.6,70.8 106.4,49.5 148.5,49.5C190.6,49.5 225.4,70.8 228.5,98.5C225.4,126.2 190.6,147.5 148.5,147.5C106.4,147.5 71.6,126.2 68.5,98.5Z" fill="#b59165"/>
<path d="M70.0,98.5C72.7,70.9 107.0,49.5 148.5,49.5C190.0,49.5 224.3,70.9 227.0,98.5C224.3,126.1 190.0,147.5 148.5,147.5C107.0,147.5 72.7,126.1 70.0,98.5Z" fill="#91724e"/>
<path d="M71.5,98.5C73.8,71.0 107.5,49.5 148.5,49.5C189.5,49.5 223.2,71.0 225.5,98.5C223.2,126.0 189.5,147.5 148.5,147.5C107.5,147.5 73.8,126.0 71.5,98.5Z" fill="#6a5034"/>
<path d="M73.0,98.5C74.9,71.0 108.1,49.5 148.5,49.5C188.9,49.5 222.1,71.0 224.0,98.5C222.1,126.0 188.9,147.5 148.5,147.5C108.1,147.5 74.9,126.0 73.0,98.5Z" fill="#6a5439"/>
<path d="M74.5,98.5C76.1,71.1 108.7,49.5 148.5,49.5C188.3,49.5 220.9,71.1 222.5,98.5C220.9,125.9 188.3,147.5 148.5,147.5C108.7,147.5 76.1,125.9 74.5,98.5Z" fill="#615035"/>
<path d="M76.0,98.5C77.3,71.2 109.3,49.5 148.5,49.5C187.7,49.5 219.7,71.2 221.0,98.5C219.7,125.8 187.7,147.5 148.5,147.5C109.3,147.5 77.3,125.8 76.0,98.5Z" fill="#7e7858"/>
<path d="M77.5,98.5C78.5,71.2 110.0,49.5 148.5,49.5C187.0,49.5 218.5,71.2 219.5,98.5C218.5,125.8 187.0,147.5 148.5,147.5C110.0,147.5 78.5,125.8 77.5,98.5Z" fill="#8a8967"/>
<path d="M79.0,98.5C79.7,71.3 110.6,49.5 148.5,49.5C186.4,49.5 217.3,71.3 218.0,98.5C217.3,125.7 186.4,147.5 148.5,147.5C110.6,147.5 79.7,125.7 79.0,98.5Z" fill="#8e8d6c"/>
<path d="M80.5,98.5C81.0,71.3 111.3,49.5 148.5,49.5C185.7,49.5 216.0,71.3 216.5,98.5C216.0,125.7 185.7,147.5 148.5,147.5C111.3,147.5 81.0,125.7 80.5,98.5Z" fill="#8f8f6e"/>
<path d="M82.0,98.5C82.3,71.4 112.0,49.5 148.5,49.5C185.0,49.5 214.7,71.4 215.0,98.5C214.7,125.6 185.0,147.5 148.5,147.5C112.0,147.5 82.3,125.6 82.0,98.5Z" fill="#939371"/>
<path d="M83.5,98.5C83.6,71.4 112.7,49.5 148.5,49.5C184.3,49.5 213.4,71.4 213.5,98.5C213.4,125.6 184.3,147.5 148.5,147.5C112.7,147.5 83.6,125.6 83.5,98.5Z" fill="#84825f"/>
<path d="M85.0,98.5C85.0,71.4 113.4,49.5 148.5,49.5C183.6,49.5 212.0,71.4 212.0,98.5C212.0,125.6 183.6,147.5 148.5,147.5C113.4,147.5 85.0,125.6 85.0,98.5Z" fill="#837f5c"/>
<path d="M86.5,98.5C86.5,71.4 114.3,49.5 148.5,49.5C182.7,49.5 210.5,71.4 210.5,98.5C210.5,125.6 182.7,147.5 148.5,147.5C114.3,147.5 86.5,125.6 86.5,98.5Z" fill="#986a46"/>
<path d="M88.0,98.5C88.0,71.4 115.1,49.5 148.5,49.5C181.9,49.5 209.0,71.4 209.0,98.5C209.0,125.6 181.9,147.5 148.5,147.5C115.1,147.5 88.0,125.6 88.0,98.5Z" fill="#b27347"/>
<path d="M89.5,98.5C89.5,71.4 115.9,49.5 148.5,49.5C181.1,49.5 207.5,71.4 207.5,98.5C207.5,125.6 181.1,147.5 148.5,147.5C115.9,147.5 89.5,125.6 89.5,98.5Z" fill="#bd8453"/>
<path d="M91.0,98.5C91.0,71.4 116.7,49.5 148.5,49.5C180.3,49.5 206.0,71.4 206.0,98.5C206.0,125.6 180.3,147.5 148.5,147.5C116.7,147.5 91.0,125.6 91.0,98.5Z" fill="#cc9865"/>
<path d="M92.5,98.5C92.5,71.4 117.6,49.5 148.5,49.5C179.4,49.5 204.5,71.4 204.5,98.5C204.5,125.6 179.4,147.5 148.5,147.5C117.6,147.5 92.5,125.6 92.5,98.5Z" fill="#d0a16d"/>
<path d="M94.0,98.5C94.0,71.4 118.4,49.5 148.5,49.5C178.6,49.5 203.0,71.4 203.0,98.5C203.0,125.6 178.6,147.5 148.5,147.5C118.4,147.5 94.0,125.6 94.0,98.5Z" fill="#d0a16d"/>
<path d="M95.5,98.5C95.5,71.4 119.2,49.5 148.5,49.5C177.8,49.5 201.5,71.4 201.5,98.5C201.5,125.6 177.8,147.5 148.5,147.5C119.2,147.5 95.5,125.6 95.5,98.5Z" fill="#c79963"/>
<path d="M97.0,98.5C97.0,71.4 120.1,49.5 148.5,49.5C176.9,49.5 200.0,71.4 200.0,98.5C200.0,125.6 176.9,147.5 148.5,147.5C120.1,147.5 97.0,125.6 97.0,98.5Z" fill="#c3955f"/>
<path d="M98.5,98.5C98.5,71.4 120.9,49.5 148.5,49.5C176.1,49.5 198.5,71.4 198.5,98.5C198.5,125.6 176.1,147.5 148.5,147.5C120.9,147.5 98.5,125.6 98.5,98.5Z" fill="#c3955e"/>
<path d="M100.0,98.5C100.0,71.4 121.7,49.5 148.5,49.5C175.3,49.5 197.0,71.4 197.0,98.5C197.0,125.6 175.3,147.5 148.5,147.5C121.7,147.5 100.0,125.6 100.0,98.5Z" fill="#bd905a"/>
<path d="M101.5,98.5C101.5,71.4 122.5,49.5 148.5,49.5C174.5,49.5 195.5,71.4 195.5,98.5C195.5,125.6 174.5,147.5 148.5,147.5C122.5,147.5 101.5,125.6 101.5,98.5Z" fill="#bd915d"/>
<path d="M103.0,98.5C103.0,71.4 123.4,49.5 148.5,49.5C173.6,49.5 194.0,71.4 194.0,98.5C194.0,125.6 173.6,147.5 148.5,147.5C123.4,147.5 103.0,125.6 103.0,98.5Z" fill="#c19664"/>
<path d="M104.5,98.5C104.5,71.4 124.2,49.5 148.5,49.5C172.8,49.5 192.5,71.4 192.5,98.5C192.5,125.6 172.8,147.5 148.5,147.5C124.2,147.5 104.5,125.6 104.5,98.5Z" fill="#b78c5c"/>
<path d="M106.0,98.5C106.0,71.4 125.0,49.5 148.5,49.5C172.0,49.5 191.0,71.4 191.0,98.5C191.0,125.6 172.0,147.5 148.5,147.5C125.0,147.5 106.0,125.6 106.0,98.5Z" fill="#af8557"/>
<path d="M107.5,98.5C107.5,71.4 125.9,49.5 148.5,49.5C171.1,49.5 189.5,71.4 189.5,98.5C189.5,125.6 171.1,147.5 148.5,147.5C125.9,147.5 107.5,125.6 107.5,98.5Z" fill="#ab8357"/>
<path d="M109.0,98.5C109.0,71.4 126.7,49.5 148.5,49.5C170.3,49.5 188.0,71.4 188.0,98.5C188.0,125.6 170.3,147.5 148.5,147.5C126.7,147.5 109.0,125.6 109.0,98.5Z" fill="#a88257"/>
<path d="M111.5,98.5C111.5,71.4 128.1,49.5 148.5,49.5C168.9,49.5 185.5,71.4 185.5,98.5C185.5,125.6 168.9,147.5 148.5,147.5C128.1,147.5 111.5,125.6 111.5,98.5Z" fill="#a8845b"/>
<path d="M114.0,98.5C114.0,71.4 129.4,49.5 148.5,49.5C167.6,49.5 183.0,71.4 183.0,98.5C183.0,125.6 167.6,147.5 148.5,147.5C129.4,147.5 114.0,125.6 114.0,98.5Z" fill="#997751"/>
<path d="M116.5,98.5C116.5,71.4 130.8,49.5 148.5,49.5C166.2,49.5 180.5,71.4 180.5,98.5C180.5,125.6 166.2,147.5 148.5,147.5C130.8,147.5 116.5,125.6 116.5,98.5Z" fill="#8f6f4b"/>
<path d="M119.0,98.5C119.0,71.4 132.2,49.5 148.5,49.5C164.8,49.5 178.0,71.4 178.0,98.5C178.0,125.6 164.8,147.5 148.5,147.5C132.2,147.5 119.0,125.6 119.0,98.5Z" fill="#846644"/>
<path d="M121.5,98.5C121.5,71.4 133.6,49.5 148.5,49.5C163.4,49.5 175.5,71.4 175.5,98.5C175.5,125.6 163.4,147.5 148.5,147.5C133.6,147.5 121.5,125.6 121.5,98.5Z" fill="#866a4b"/>
<path d="M124.0,98.5C124.0,71.4 135.0,49.5 148.5,49.5C162.0,49.5 173.0,71.4 173.0,98.5C173.0,125.6 162.0,147.5 148.5,147.5C135.0,147.5 124.0,125.6 124.0,98.5Z" fill="#775d40"/>
<path d="M126.5,98.5C126.5,71.4 136.3,49.5 148.5,49.5C160.7,49.5 170.5,71.4 170.5,98.5C170.5,125.6 160.7,147.5 148.5,147.5C136.3,147.5 126.5,125.6 126.5,98.5Z" fill="#6c5439"/>
<path d="M129.0,98.5C129.0,71.4 137.7,49.5 148.5,49.5C159.3,49.5 168.0,71.4 168.0,98.5C168.0,125.6 159.3,147.5 148.5,147.5C137.7,147.5 129.0,125.6 129.0,98.5Z" fill="#654e34"/>
<path d="M131.5,98.5C131.5,71.4 139.1,49.5 148.5,49.5C157.9,49.5 165.5,71.4 165.5,98.5C165.5,125.6 157.9,147.5 148.5,147.5C139.1,147.5 131.5,125.6 131.5,98.5Z" fill="#5f4931"/>
<path d="M134.0,98.5C134.0,71.4 140.5,49.5 148.5,49.5C156.5,49.5 163.0,71.4 163.0,98.5C163.0,125.6 156.5,147.5 148.5,147.5C140.5,147.5 134.0,125.6 134.0,98.5Z" fill="#5a462f"/>
<path d="M136.5,98.5C136.5,71.4 141.9,49.5 148.5,49.5C155.1,49.5 160.5,71.4 160.5,98.5C160.5,125.6 155.1,147.5 148.5,147.5C141.9,147.5 136.5,125.6 136.5,98.5Z" fill="#5a4731"/>
<path d="M139.0,98.5C139.0,71.4 143.3,49.5 148.5,49.5C153.7,49.5 158.0,71.4 158.0,98.5C158.0,125.6 153.7,147.5 148.5,147.5C143.3,147.5 139.0,125.6 139.0,98.5Z" fill="#513f2a"/>
<path d="M141.5,98.5C141.5,71.4 144.6,49.5 148.5,49.5C152.4,49.5 155.5,71.4 155.5,98.5C155.5,125.6 152.4,147.5 148.5,147.5C144.6,147.5 141.5,125.6 141.5,98.5Z" fill="#4d3b27"/>
<path d="M144.0,98.5C144.0,71.4 146.0,49.5 148.5,49.5C151.0,49.5 153.0,71.4 153.0,98.5C153.0,125.6 151.0,147.5 148.5,147.5C146.0,147.5 144.0,125.6 144.0,98.5Z" fill="#4f3e2c"/>
<path d="M146.5,98.5C146.5,71.4 147.4,49.5 148.5,49.5C149.6,49.5 150.5,71.4 150.5,98.5C150.5,125.6 149.6,147.5 148.5,147.5C147.4,147.5 146.5,125.6 146.5,98.5Z" fill="#493928"/>
</g>
<ellipse cx="148.5" cy="98.5" rx="38" ry="42" fill="url(#cdk)"/>
<ellipse cx="148.5" cy="98.5" rx="63" ry="48.5" fill="url(#bsh)"/>
<ellipse cx="148.5" cy="20" rx="8" ry="28" fill="url(#spk)"/>
<path d="M148.5,50 L145.5,18 L151.5,18 Z" fill="#dcbc82" fill-opacity=".75" filter="url(#ab1)"/>
<ellipse cx="148.5" cy="20" rx="8" ry="28" fill="url(#spk)" transform="translate(0 197) scale(1 -1)"/>
<path d="M148.5,50 L145.5,18 L151.5,18 Z" fill="#dcbc82" fill-opacity=".75" filter="url(#ab1)" transform="translate(0 197) scale(1 -1)"/>
<ellipse cx="148.5" cy="0" rx="120" ry="6" fill="url(#edg2)"/>
<ellipse cx="148.5" cy="196" rx="120" ry="6" fill="url(#edg2)"/>
<ellipse cx="148.5" cy="98.5" rx="42" ry="5" fill="url(#hmid)"/>
</g></svg>
</div>
<div class="abs" id="namebar"></div>
<div class="abs" id="nm"><span>4 QFlip ZBottomR</span></div>
<div class="abs" id="prog"></div>
<div class="ln" style="top:348px"></div>
<div class="ln" style="top:366px"></div>
<div class="ln" style="top:384px"></div>
<div class="ln" style="top:402px"></div>
<div class="ln" style="top:420px"></div>
<div class="ln" style="top:438px"></div>
<div class="ln" style="top:456px"></div>
<div class="abs" id="wm1">Pinuccia</div>
<div class="abs" id="wm2">www.maidiregrafica.eu</div>
<div class="abs" id="rbar"></div>
<div class="bb" style="left:568px;top:483px">Randomize</div>
<div class="bb" style="left:667px;top:483px">Reset</div>
<div class="st" style="left:11px;top:518px">Database:</div>
<div class="st" style="left:68px;top:518px">ICNET-Filters</div>
<div class="st" style="left:11px;top:531px">Filters:</div>
<div class="st" style="left:68px;top:531px">921</div>
<div class="btn" id="b1"><span>Apply</span></div>
<div class="btn" id="b2"><span>Cancel</span></div>
<div class="btn" id="b3"><span>Help</span></div>
<div class="abs" style="left:0;top:549px;width:736px;height:3px;background:linear-gradient(#e2dfce,#cfccbb)"></div>
<div class="abs" style="left:734px;top:28px;width:2px;height:521px;background:#e2dfce"></div>

</body></html>
